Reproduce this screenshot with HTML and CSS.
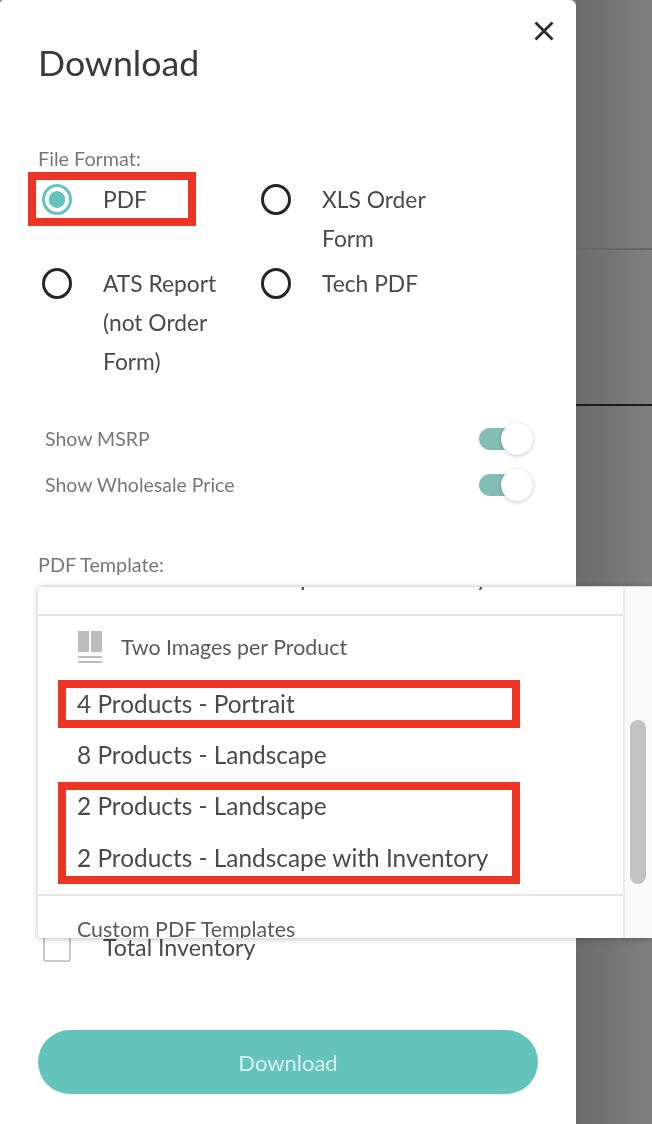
FILE: index.html
```html
<!DOCTYPE html>
<html lang="en">
<head>
<meta charset="utf-8">
<title>Download</title>
<link rel="stylesheet" href="styles.css">
</head>
<body>
<div class="app">
  <aside class="drawer">
    <button class="close" aria-label="Close">
      <svg viewBox="0 0 20 20" width="20" height="20"><path d="M1.500 1.500 18.500 18.500M18.500 1.500 1.500 18.500" fill="none" stroke="#2b2b2b" stroke-width="2.800"/></svg>
    </button>
    <h1 class="title">Download</h1>
    <div class="field-label format-label">File Format:</div>
    <div class="radio-grid">
      <div class="radio-item"><span class="radio radio-on"></span><span class="radio-text">PDF</span></div>
      <div class="radio-item"><span class="radio"></span><span class="radio-text">XLS Order Form</span></div>
      <div class="radio-item"><span class="radio"></span><span class="radio-text">ATS Report (not Order Form)</span></div>
      <div class="radio-item"><span class="radio"></span><span class="radio-text">Tech PDF</span></div>
    </div>
    <div class="toggles">
      <div class="toggle-row"><span>Show MSRP</span><span class="switch"><span class="knob"></span></span></div>
      <div class="toggle-row"><span>Show Wholesale Price</span><span class="switch"><span class="knob"></span></span></div>
    </div>
    <div class="field-label template-label">PDF Template:</div>
    <div class="check-row"><span class="checkbox"></span><span class="check-text">Total Inventory</span></div>
    <button class="download">Download</button>
  </aside>
  <div class="backdrop">
    <div class="line-faint"></div>
    <div class="line-dark"></div>
  </div>

  <div class="dropdown">
    <div class="menu">
      <div class="menu-option clipped-option">4 Products - Landscape with Inventory</div>
      <div class="menu-group">
        <div class="group-head">
          <svg class="group-icon" viewBox="0 0 24 32" width="24" height="32"><path d="M0 0h11v21H0zM13 0h11v21H13zM0 25h24v2H0zM0 30h24v2H0z" fill="#bcbcbc"/></svg>
          <span>Two Images per Product</span>
        </div>
        <div class="menu-option">4 Products - Portrait</div>
        <div class="menu-option">8 Products - Landscape</div>
        <div class="menu-option">2 Products - Landscape</div>
        <div class="menu-option">2 Products - Landscape with Inventory</div>
      </div>
      <div class="custom-head">Custom PDF Templates</div>
    </div>
    <div class="scrolltrack"><div class="scrollthumb"></div></div>
  </div>

  <div class="mark mark-pdf"></div>
  <div class="mark mark-portrait"></div>
  <div class="mark mark-landscape"></div>
</div>
</body>
</html>
```
FILE: styles.css
```css
* { box-sizing: border-box; }
html, body { margin: 0; padding: 0; }
body {
  font-family: Lato, "Open Sans", sans-serif;
  background: #777;
  overflow: hidden;
}
.app {
  position: relative;
  display: flex;
  width: 652px;
  height: 1124px;
  overflow: hidden;
  background: #777;
  filter: blur(0.6px);
}
.drawer {
  position: relative;
  flex: 0 0 576px;
  height: 1124px;
  padding: 43px 38px 0;
  background: #fff;
  border-top-right-radius: 6px;
  border-top-left-radius: 4px;
}
.close {
  position: absolute;
  top: 21px;
  left: 534px;
  width: 20px;
  height: 20px;
  padding: 0;
  border: 0;
  background: none;
}
.close svg { display: block; }
.title {
  margin: 0;
  font-size: 35.700px;
  line-height: 40px;
  font-weight: 400;
  color: #3a3a3a;
}
.field-label {
  font-size: 19.800px;
  line-height: 20px;
  color: #777;
}
.format-label { margin-top: 65px; }
.radio-grid {
  display: grid;
  grid-template-columns: 219px 219px;
  row-gap: 7px;
  margin-top: 12px;
  padding-left: 4px;
}
.radio-item {
  display: flex;
  align-items: flex-start;
  gap: 31px;
}
.radio {
  flex: none;
  width: 30px;
  height: 31px;
  margin-top: 4px;
  border: 3px solid #262626;
  border-radius: 50%;
  background: #fff;
}
.radio-on {
  border-color: #63c4bc;
  background: radial-gradient(circle, #63c4bc 0 8px, #fff 8.500px);
}
.radio-text {
  width: 130px;
  font-size: 22.800px;
  line-height: 38.700px;
  color: #4a4a4a;
}
.toggles { margin-top: 35px; }
.toggle-row {
  display: flex;
  align-items: center;
  justify-content: space-between;
  height: 46px;
  padding: 0 5px 0 7px;
  font-size: 19.500px;
  color: #777;
}
.switch {
  position: relative;
  width: 54px;
  height: 22px;
  border-radius: 11px;
  background: #82bdb6;
}
.knob {
  position: absolute;
  top: -5px;
  right: 0;
  width: 32px;
  height: 32px;
  border-radius: 50%;
  background: #fff;
  box-shadow: 0 1px 4px rgba(0, 0, 0, 0.22);
}
.template-label { margin-top: 46px; }
.check-row {
  display: flex;
  align-items: center;
  height: 30px;
  margin-top: 359px;
  padding-left: 5px;
  gap: 32px;
}
.checkbox {
  flex: none;
  width: 28px;
  height: 28px;
  border: 2px solid #c9c9c9;
  border-radius: 3px;
}
.check-text {
  margin-top: -2px;
  font-size: 23.200px;
  color: #4a4a4a;
}
.download {
  display: block;
  width: 500px;
  height: 64px;
  margin-top: 67px;
  padding: 2px 0 0;
  border: 0;
  border-radius: 32px;
  background: #64c4bc;
  font-family: inherit;
  font-size: 22px;
  color: #d9f1ee;
}
.backdrop {
  position: relative;
  flex: 1;
  background: linear-gradient(90deg, #6a6a6a, #808080);
}
.line-faint {
  height: 2px;
  margin-top: 248px;
  background: #666;
}
.line-dark {
  height: 2px;
  margin-top: 154px;
  background: #1c1c1c;
}
.dropdown {
  position: absolute;
  top: 586px;
  left: 38px;
  display: flex;
  width: 614px;
  height: 352px;
  overflow: hidden;
  background: #fff;
  border-top: 1px solid #ddd;
  border-top-left-radius: 4px;
  border-bottom-left-radius: 4px;
  box-shadow: 0 1px 6px rgba(0, 0, 0, 0.25);
}
.menu {
  flex: 0 0 585px;
  height: 351px;
  overflow: hidden;
}
.clipped-option { margin-top: -36px; }
.menu-group {
  margin-top: 11.800px;
  padding-top: 6px;
  padding-bottom: 11px;
  border-top: 2px solid #e6e6e6;
  border-bottom: 2px solid #e6e6e6;
}
.group-head {
  display: flex;
  align-items: center;
  gap: 19px;
  height: 50px;
  margin-bottom: 6px;
  padding-left: 40px;
  font-size: 21.400px;
  color: #5a5a5a;
}
.group-icon { flex: none; }
.menu-option {
  height: 51.200px;
  padding-left: 39px;
  font-size: 24.400px;
  line-height: 51.200px;
  white-space: nowrap;
  color: #4a4a4a;
}
.custom-head {
  margin-top: 21px;
  padding-left: 39px;
  font-size: 21.400px;
  line-height: 24px;
  color: #5a5a5a;
}
.scrolltrack {
  position: relative;
  flex: 1;
  background: #fafafa;
  border-left: 2px solid #ececec;
}
.scrollthumb {
  position: absolute;
  top: 133px;
  left: 5px;
  width: 16px;
  height: 164px;
  border-radius: 8px;
  background: #c2c2c2;
}
.mark {
  position: absolute;
  border: 8px solid #ee3524;
}
.mark-pdf { top: 172px; left: 28px; width: 168px; height: 54px; }
.mark-portrait { top: 680px; left: 58px; width: 462px; height: 48px; }
.mark-landscape { top: 782px; left: 58px; width: 462px; height: 102px; }
```
